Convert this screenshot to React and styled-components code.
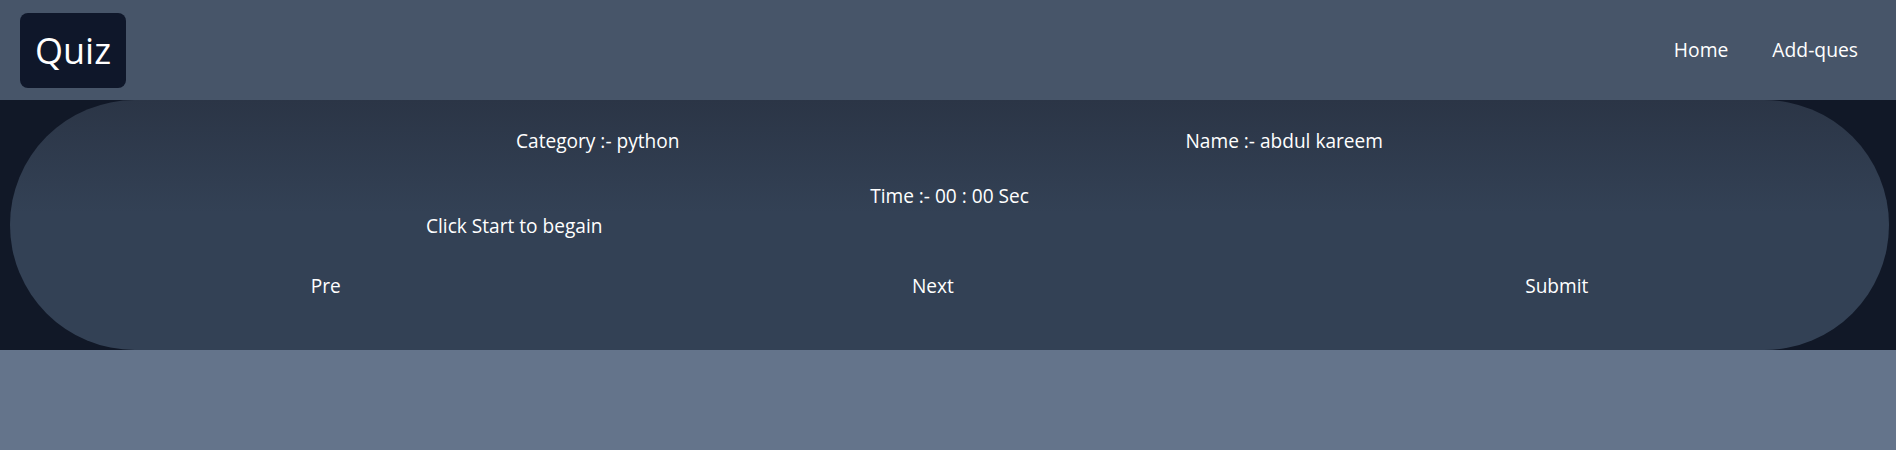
import styled, { createGlobalStyle } from 'styled-components';

const GlobalStyle = createGlobalStyle`
  html, body {
    margin: 0;
    padding: 0;
    min-height: 100vh;
    background-color: #64748b;
    font-family: 'Open Sans', 'Liberation Sans', sans-serif;
    color: #ffffff;
  }
`;

function Navbar() {
  return (
    <Header>
      <Logo>Quiz</Logo>
      <Nav>
        <NavLink>Home</NavLink>
        <NavLink>Add-ques</NavLink>
      </Nav>
    </Header>
  );
}

function QuizCard({ category, name, time, message }) {
  return (
    <Band>
      <Pill>
        <InfoRow>
          <span>Category :- {category}</span>
          <span>Name :- {name}</span>
        </InfoRow>
        <Timer>Time :- {time} Sec</Timer>
        <Question>{message}</Question>
        <Controls>
          <ControlButton>Pre</ControlButton>
          <ControlButton>Next</ControlButton>
          <ControlButton>Submit</ControlButton>
        </Controls>
      </Pill>
    </Band>
  );
}

function App() {
  return (
    <>
      <GlobalStyle />
      <Navbar />
      <QuizCard
        category="python"
        name="abdul kareem"
        time="00 : 00"
        message="Click Start to begain"
      />
    </>
  );
}

const Header = styled.header`
  height: 100px;
  box-sizing: border-box;
  display: flex;
  align-items: center;
  justify-content: space-between;
  padding: 0 38px 0 20px;
  background-color: #475569;
`;

const Logo = styled.div`
  display: flex;
  align-items: center;
  justify-content: center;
  width: 106px;
  height: 75px;
  border-radius: 8px;
  background-color: #0f172a;
  font-size: 36px;
  box-sizing: border-box;
`;

const Nav = styled.nav`
  display: flex;
  gap: 44px;
  padding-bottom: 1px;
`;

const NavLink = styled.a`
  font-size: 19.3px;
  color: #ffffff;
  cursor: pointer;
`;

const Band = styled.main`
  background-color: #111827;
  padding: 0 7px 0 10px;
`;

const Pill = styled.section`
  height: 250px;
  box-sizing: border-box;
  display: flex;
  flex-direction: column;
  padding: 27px 15px 0;
  border-radius: 125px;
  background: linear-gradient(to bottom, #2b3546 0%, #334155 45%, #334155 100%);
  font-size: 19.1px;
  line-height: 28px;
`;

const InfoRow = styled.div`
  display: flex;
  justify-content: space-evenly;
  margin: 0 -15px;
`;

const Timer = styled.div`
  margin-top: 27px;
  text-align: center;
`;

const Question = styled.div`
  margin-top: 2px;
  padding-left: 401px;
`;

const Controls = styled.div`
  display: flex;
  justify-content: space-around;
  margin-top: 32px;
`;

const ControlButton = styled.button`
  background: none;
  border: none;
  padding: 0 15px;
  font: inherit;
  line-height: 28px;
  color: #ffffff;
  cursor: pointer;
`;

export default App;
